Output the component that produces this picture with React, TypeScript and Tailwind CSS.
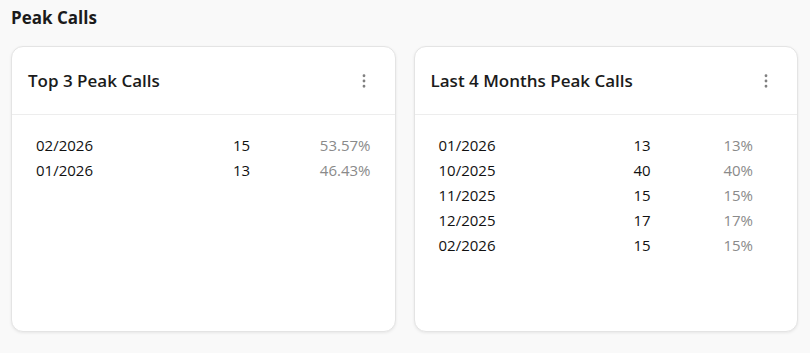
import React from 'react';
import { MoreVertical } from 'lucide-react';

type Row = { month: string; calls: number; pct: string };

const topPeaks: Row[] = [
    { month: '02/2026', calls: 15, pct: '53.57%' },
    { month: '01/2026', calls: 13, pct: '46.43%' },
];

const lastMonths: Row[] = [
    { month: '01/2026', calls: 13, pct: '13%' },
    { month: '10/2025', calls: 40, pct: '40%' },
    { month: '11/2025', calls: 15, pct: '15%' },
    { month: '12/2025', calls: 17, pct: '17%' },
    { month: '02/2026', calls: 15, pct: '15%' },
];

const PeakCard = ({ title, rows, cols, padRight }: { title: string; rows: Row[]; cols: string; padRight: string }) => (
    <div className="h-[286px] flex-1 rounded-xl border border-[#e4e4e4] bg-white shadow-[0_1px_3px_rgba(0,0,0,0.08)]">
        <div className="flex h-[68px] items-center justify-between border-b border-[#ededed] pl-4 pr-[22px]">
            <h3 className="text-[17px] font-semibold text-[#1b1b1b]">{title}</h3>
            <MoreVertical size={18} strokeWidth={1.75} className="text-[#808080]" />
        </div>
        <div className={`pt-[18px] pl-6 ${padRight}`}>
            {rows.map((r) => (
                <div key={r.month + r.pct} className={`grid h-[25px] items-center text-[15px] ${cols}`}>
                    <span className="text-[#111]">{r.month}</span>
                    <span className="text-[#111]">{r.calls}</span>
                    <span className="text-right text-[#8a8a8a]">{r.pct}</span>
                </div>
            ))}
        </div>
    </div>
);

export default function App() {
    return (
        <div className="h-[353px] w-[810px] bg-[#f9f9f9] px-[11px] pt-[6px] font-['Segoe_UI','Open_Sans',sans-serif]">
            <h2 className="mb-[16px] text-[17px] font-bold leading-[24px] text-[#1b1b1b]">Peak Calls</h2>
            <div className="flex gap-[18px] pr-[1px]">
                <PeakCard title="Top 3 Peak Calls" rows={topPeaks} cols="grid-cols-[197px_1fr_auto]" padRight="pr-6" />
                <PeakCard title="Last 4 Months Peak Calls" rows={lastMonths} cols="grid-cols-[195px_1fr_auto]" padRight="pr-[44px]" />
            </div>
        </div>
    );
}
